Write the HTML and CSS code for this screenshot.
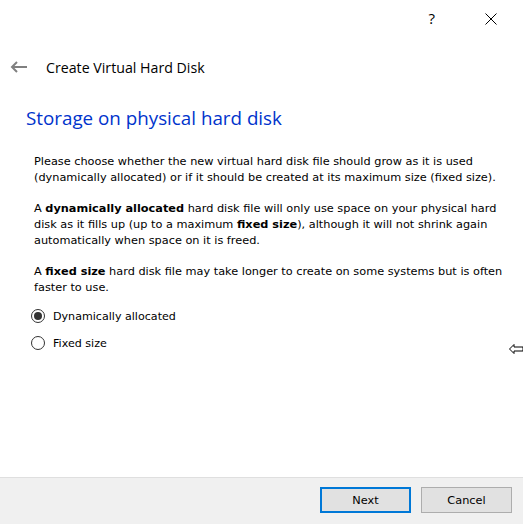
FILE: index.html
```html
<!DOCTYPE html>
<html lang="en">
<head>
<meta charset="utf-8">
<title>Create Virtual Hard Disk</title>
<link rel="stylesheet" href="styles.css">
</head>
<body>
<div class="dialog">
  <div class="titlebar">
    <span class="help">?</span>
    <span class="close">
      <svg width="12" height="12" viewBox="0 0 12 12"><path d="M0.5 0.5 L11.5 11.5 M11.5 0.5 L0.5 11.5" stroke="#000" stroke-width="1" fill="none"/></svg>
    </span>
  </div>
  <div class="header">
    <svg class="back" width="18" height="12" viewBox="0 0 18 12"><path d="M17 6 H2 M7 1 L2 6 L7 11" stroke="#808080" stroke-width="2" fill="none"/></svg>
    <span class="header-text">Create Virtual Hard Disk</span>
  </div>
  <main class="content">
    <h1 class="page-title">Storage on physical hard disk</h1>
    <div class="body-text">
      <p>Please choose whether the new virtual hard disk file should grow as it is used (dynamically allocated) or if it should be created at its maximum size (fixed size).</p>
      <p>A <b>dynamically allocated</b> hard disk file will only use space on your physical hard disk as it fills up (up to a maximum <b>fixed size</b>), although it will not shrink again automatically when space on it is freed.</p>
      <p>A <b>fixed size</b> hard disk file may take longer to create on some systems but is often faster to use.</p>
    </div>
    <div class="options">
      <label class="option"><span class="radio checked"></span><span>Dynamically allocated</span></label>
      <label class="option"><span class="radio"></span><span>Fixed size</span></label>
    </div>
    <svg class="cursor" width="16" height="10" viewBox="0 0 16 10"><path d="M0.5 5 L5 0.5 V3 H14 V7 H5 V9.5 Z" fill="#fff" stroke="#000" stroke-width="1"/></svg>
  </main>
  <footer class="footer">
    <button class="btn btn-default">Next</button>
    <button class="btn">Cancel</button>
  </footer>
</div>
</body>
</html>
```
FILE: styles.css
```css
html, body {
  margin: 0;
  padding: 0;
  background: #fff;
}
.dialog {
  width: 523px;
  height: 524px;
  display: flex;
  flex-direction: column;
  overflow: hidden;
}
.titlebar {
  height: 37px;
  display: flex;
  align-items: flex-start;
  justify-content: flex-end;
  padding-top: 11px;
  box-sizing: border-box;
}
.help {
  font-family: "Open Sans", sans-serif;
  font-size: 15px;
  line-height: 15px;
  color: #000;
  margin-right: 50px;
}
.close {
  margin-right: 26px;
  margin-top: 2px;
  display: block;
  line-height: 0;
}
.header {
  display: flex;
  align-items: center;
  height: 20px;
  margin-top: 20px;
  padding-left: 10px;
}
.back {
  display: block;
  margin-right: 18px;
}
.header-text {
  font-family: "Open Sans", sans-serif;
  font-size: 14.2px;
  color: #000;
}
.content {
  flex: 1;
  position: relative;
}
.page-title {
  font-family: "Open Sans", sans-serif;
  font-weight: normal;
  font-size: 18.8px;
  color: #0033cc;
  margin: 27px 0 0 26px;
  line-height: 28px;
}
.body-text {
  margin: 22px 0 0 34px;
  font-family: "DejaVu Sans", sans-serif;
  font-size: 11.3px;
  line-height: 16px;
  color: #000;
  width: 482px;
}
.body-text p {
  margin: 0 0 15px 0;
}
.body-text b {
  font-weight: bold;
}
.options {
  margin: -5px 0 0 31px;
  display: flex;
  flex-direction: column;
  gap: 7px;
}
.option {
  display: flex;
  align-items: center;
  height: 20px;
  font-family: "DejaVu Sans", sans-serif;
  font-size: 11.1px;
  color: #000;
}
.radio {
  width: 12px;
  height: 12px;
  border: 1px solid #333;
  border-radius: 50%;
  margin-right: 8px;
  position: relative;
  background: #fff;
}
.radio.checked::after {
  content: "";
  position: absolute;
  left: 2px;
  top: 2px;
  width: 8px;
  height: 8px;
  border-radius: 50%;
  background: #333;
}
.cursor {
  position: absolute;
  left: 509px;
  top: 267px;
}
.footer {
  height: 47px;
  box-sizing: border-box;
  border-top: 1px solid #dfdfdf;
  background: #f0f0f0;
  display: flex;
  justify-content: flex-end;
  align-items: flex-start;
  padding: 9px 11px 0 0;
  gap: 10px;
}
.btn {
  width: 91px;
  height: 26px;
  box-sizing: border-box;
  background: #e1e1e1;
  border: 1px solid #adadad;
  font-family: "DejaVu Sans", sans-serif;
  font-size: 11.3px;
  color: #000;
  padding: 0;
}
.btn-default {
  border: 2px solid #0078d7;
}
```
